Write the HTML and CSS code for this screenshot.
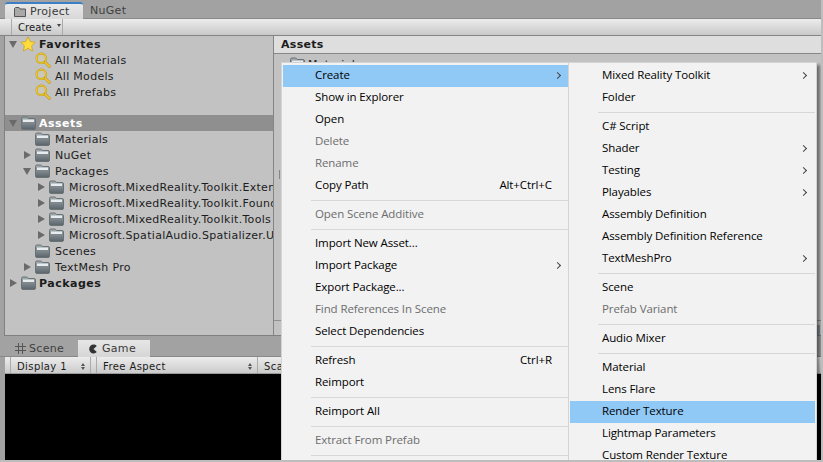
FILE: index.html
```html
<!DOCTYPE html>
<html lang="en">
<head>
  <meta charset="UTF-8">
  <meta name="viewport" content="width=device-width, initial-scale=1.0">
  <title>Project</title>
  <link rel="stylesheet" href="styles.css">
</head>
<body>

  <svg class="defs" width="0" height="0">
    <linearGradient id="folder-body" x1="0" y1="0" x2="0" y2="1">
      <stop offset="0" stop-color="#a3adb1"/>
      <stop offset="1" stop-color="#59636a"/>
    </linearGradient>
    <symbol id="folder" viewBox="0 0 15 14">
      <path d="M.5 12 V2.500 Q.5 1 2 1 H5.500 Q6.500 1 7 2 L7.500 2.500 H13 Q14.500 2.500 14.500 4 V12 Q14.500 13.500 13 13.500 H2 Q.5 13.500 .5 12 Z" fill="url(#folder-body)" stroke="#6a7275"/>
      <path d="M2 3.500 H13 V6 H2 Z" fill="#e8ecee"/>
      <path d="M1 6 H14 V7 H1 Z" fill="#7f8a8e"/>
    </symbol>
    <symbol id="search" viewBox="0 0 16 16">
      <circle cx="6.300" cy="6.300" r="4.800" fill="#cbc8b6" stroke="#b8941a" stroke-width="2"/>
      <circle cx="6.300" cy="6.300" r="4.800" fill="none" stroke="#f4cc2c" stroke-width="1.200"/>
      <path d="M10 10 L14.500 14.500" stroke="#b8941a" stroke-width="2.600" stroke-linecap="round"/>
      <path d="M10 10 L14.500 14.500" stroke="#f4cc2c" stroke-width="1.500" stroke-linecap="round"/>
    </symbol>
  </svg>

  <div class="window">

    <!-- project window -->
    <div class="tabbar">
      <div class="tab tab-project">
        <svg class="tab-icon" width="12" height="10" viewBox="0 0 12 10"><path d="M.5 9.500 V1.500 L1.500 .5 H5 L6 2 H11.500 V9.500 Z" fill="#a8a8a8" stroke="#555"/></svg>
        Project
      </div>
      <div class="tab tab-off">NuGet</div>
    </div>
    <div class="toolbar">
      <div class="create-btn">Create <span class="caret"></span></div>
    </div>

    <div class="panes">
      <div class="tree">
        <div class="row depth-0"><span class="arrow down"></span>
          <svg class="star" width="16" height="16" viewBox="0 0 16 16"><path d="M8 .8 L10.200 5.600 L15.300 6.200 L11.600 9.800 L12.600 15 L8 12.400 L3.400 15 L4.400 9.800 L.7 6.200 L5.800 5.600 Z" fill="#ffdc3c" stroke="#c9a227" stroke-width=".8"/></svg>
          <b>Favorites</b></div>
        <div class="row depth-1"><span class="arrow none"></span><svg class="lens"><use href="#search"/></svg>All Materials</div>
        <div class="row depth-1"><span class="arrow none"></span><svg class="lens"><use href="#search"/></svg>All Models</div>
        <div class="row depth-1 last-fav"><span class="arrow none"></span><svg class="lens"><use href="#search"/></svg>All Prefabs</div>

        <div class="row depth-0 selected"><span class="arrow down"></span><svg class="ico"><use href="#folder"/></svg><b>Assets</b></div>
        <div class="row depth-1"><span class="arrow none"></span><svg class="ico"><use href="#folder"/></svg>Materials</div>
        <div class="row depth-1"><span class="arrow right"></span><svg class="ico"><use href="#folder"/></svg>NuGet</div>
        <div class="row depth-1"><span class="arrow down"></span><svg class="ico"><use href="#folder"/></svg>Packages</div>
        <div class="row depth-2"><span class="arrow right"></span><svg class="ico"><use href="#folder"/></svg>Microsoft.MixedReality.Toolkit.Extensions</div>
        <div class="row depth-2"><span class="arrow right"></span><svg class="ico"><use href="#folder"/></svg>Microsoft.MixedReality.Toolkit.Foundation</div>
        <div class="row depth-2"><span class="arrow right"></span><svg class="ico"><use href="#folder"/></svg>Microsoft.MixedReality.Toolkit.Tools</div>
        <div class="row depth-2"><span class="arrow right"></span><svg class="ico"><use href="#folder"/></svg>Microsoft.SpatialAudio.Spatializer.Unity</div>
        <div class="row depth-1"><span class="arrow none"></span><svg class="ico"><use href="#folder"/></svg>Scenes</div>
        <div class="row depth-1"><span class="arrow right"></span><svg class="ico"><use href="#folder"/></svg>TextMesh Pro</div>
        <div class="row depth-0"><span class="arrow right"></span><svg class="ico"><use href="#folder"/></svg><b>Packages</b></div>
      </div>
      <div class="browser">
        <div class="browser-head"><b>Assets</b></div>
        <div class="browser-body">
          <div class="row browser-row"><svg class="ico"><use href="#folder"/></svg>Materials</div>
          <span class="stub"></span>
        </div>
        <div class="browser-status"><span class="slider"></span></div>
      </div>
    </div>

    <!-- game window -->
    <div class="tabbar tabbar-low">
      <div class="tab tab-off tab-scene">
        <svg class="tab-icon" width="11" height="11" viewBox="0 0 11 11"><path d="M3.500 0 V11 M7.500 0 V11 M0 3.500 H11 M0 7.500 H11" stroke="#555" fill="none"/></svg>
        Scene
      </div>
      <div class="tab tab-game">
        <svg class="tab-icon" width="10" height="10" viewBox="0 0 10 10"><path d="M8.800 2 A4.400 4.400 0 1 0 8.800 8 L5.500 5 Z" fill="#333"/></svg>
        Game
      </div>
    </div>
    <div class="game-bar">
      <div class="drop drop-display">Display 1 <span class="updown"></span></div>
      <div class="drop drop-aspect">Free Aspect <span class="updown"></span></div>
      <div class="drop">Scale</div>
    </div>
    <div class="game-view"></div>

    <!-- context menu -->
    <div class="menu menu-main">
      <div class="item hot has-sub">Create</div>
      <div class="item">Show in Explorer</div>
      <div class="item">Open</div>
      <div class="item off">Delete</div>
      <div class="item off">Rename</div>
      <div class="item">Copy Path<span class="keys">Alt+Ctrl+C</span></div>
      <div class="sep"></div>
      <div class="item off">Open Scene Additive</div>
      <div class="sep"></div>
      <div class="item">Import New Asset...</div>
      <div class="item has-sub">Import Package</div>
      <div class="item">Export Package...</div>
      <div class="item off">Find References In Scene</div>
      <div class="item">Select Dependencies</div>
      <div class="sep"></div>
      <div class="item">Refresh<span class="keys">Ctrl+R</span></div>
      <div class="item">Reimport</div>
      <div class="sep"></div>
      <div class="item">Reimport All</div>
      <div class="sep"></div>
      <div class="item off">Extract From Prefab</div>
      <div class="sep"></div>
    </div>

    <div class="menu menu-sub">
      <div class="item has-sub">Mixed Reality Toolkit</div>
      <div class="item">Folder</div>
      <div class="sep"></div>
      <div class="item">C# Script</div>
      <div class="item has-sub">Shader</div>
      <div class="item has-sub">Testing</div>
      <div class="item has-sub">Playables</div>
      <div class="item">Assembly Definition</div>
      <div class="item">Assembly Definition Reference</div>
      <div class="item has-sub">TextMeshPro</div>
      <div class="sep"></div>
      <div class="item">Scene</div>
      <div class="item off">Prefab Variant</div>
      <div class="sep"></div>
      <div class="item">Audio Mixer</div>
      <div class="sep"></div>
      <div class="item">Material</div>
      <div class="item">Lens Flare</div>
      <div class="item hot">Render Texture</div>
      <div class="item">Lightmap Parameters</div>
      <div class="item">Custom Render Texture</div>
    </div>

  </div>

</body>
</html>
```

FILE: styles.css
```css
html, body {
  height: 100%;
  margin: 0;
  overflow: hidden;
}
body {
  background-color: #bdbdbd;
  font-family: "DejaVu Sans", sans-serif;
  font-size: 11px;
  letter-spacing: .3px;
  color: #1c1c1c;
}
.defs {
  position: absolute;
}
.window {
  position: relative;
  display: flex;
  flex-direction: column;
  width: 821px;
  height: 460px;
  overflow: hidden;
  background-color: #a2a2a2;
}

/* tabs */
.tabbar {
  display: flex;
  flex: none;
  height: 19px;
  box-sizing: border-box;
  padding: 2px 0 0 5px;
  border-bottom: 1px solid #888;
  background-color: #a2a2a2;
}
.tab {
  display: flex;
  align-items: center;
  gap: 4px;
  color: #3a3a3a;
  box-sizing: border-box;
}
.tab-project {
  width: 78px;
  padding-left: 9px;
  margin-bottom: -1px;
  border-top: 2px solid #3c7fc4;
  border-radius: 3px 3px 0 0;
  background: linear-gradient(#e8e8e8, #d8d8d8);
}
.tab-off {
  padding-left: 7px;
  color: #3f3f3f;
}
.tabbar-low {
  height: 21px;
  padding-top: 4px;
}
.tab-scene {
  width: 73px;
  padding-left: 10px;
  gap: 3px;
}
.tab-game {
  width: 72px;
  padding-left: 10px;
  gap: 4px;
  margin-bottom: -1px;
  background: linear-gradient(#e6e6e6, #d6d6d6);
}

.toolbar {
  display: flex;
  flex: none;
  height: 17px;
  box-sizing: border-box;
  padding-left: 11px;
  border-bottom: 1px solid #848484;
  background: linear-gradient(#ececec, #c9c9c9);
}
.create-btn {
  display: flex;
  align-items: center;
  width: 52px;
  box-sizing: border-box;
  padding-left: 6px;
  gap: 5px;
  border-left: 1px solid #aaa;
  border-right: 1px solid #aaa;
  font-size: 10px;
  letter-spacing: .1px;
}
.caret {
  border-left: 2.500px solid transparent;
  border-right: 2.500px solid transparent;
  border-top: 3px solid #444;
  margin-top: -3px;
}

/* panes */
.panes {
  display: flex;
  flex: none;
  height: 299px;
  margin-left: 4px;
  border-left: 1px solid #808080;
  border-bottom: 1px solid #808080;
  background-color: #c2c2c2;
}
.tree {
  width: 268px;
  flex: none;
  overflow: hidden;
  border-right: 1px solid #858585;
}
.row {
  display: flex;
  align-items: center;
  height: 16px;
  white-space: nowrap;
}
.row b {
  letter-spacing: .5px;
}
.depth-0 { padding-left: 3px; }
.depth-1 { padding-left: 17px; }
.depth-2 { padding-left: 31px; }
.depth-1 .ico, .depth-2 .ico { margin-right: 5px; }
.last-fav { margin-bottom: 15px; }
.selected {
  background-color: #8f8f8f;
  color: #fff;
}
.arrow {
  flex: none;
  width: 0;
  height: 0;
  margin-right: 4px;
}
.arrow.down {
  border-left: 4px solid transparent;
  border-right: 4px solid transparent;
  border-top: 7px solid #6a6a6a;
  margin-left: 1px;
}
.arrow.right {
  border-top: 4px solid transparent;
  border-bottom: 4px solid transparent;
  border-left: 7px solid #6a6a6a;
  margin-left: 2px;
}
.arrow.none {
  width: 13px;
  margin-right: 0;
}
.ico {
  flex: none;
  width: 15px;
  height: 14px;
  margin-right: 3px;
}
.lens {
  flex: none;
  width: 16px;
  height: 16px;
  margin-right: 4px;
}
.star {
  flex: none;
  margin: 0 3px 0 -1px;
}

.browser {
  display: flex;
  flex-direction: column;
  flex: 1;
  overflow: hidden;
}
.browser-head {
  flex: none;
  height: 18px;
  box-sizing: border-box;
  padding: 2px 0 0 7px;
  border-bottom: 1px solid #888;
  background-color: #dedede;
}
.browser-body {
  position: relative;
  flex: 1;
  padding-top: 2px;
}
.browser-row {
  padding-left: 16px;
}
.stub {
  position: absolute;
  top: 116px;
  left: 5px;
  width: 1px;
  height: 9px;
  background-color: #858585;
}
.browser-status {
  display: flex;
  justify-content: flex-end;
  flex: none;
  height: 14px;
  padding-right: 1px;
  border-top: 1px solid #909090;
}
.slider {
  width: 3px;
  height: 10px;
  margin: 4px 0 0 4px;
  background-color: #8b9296;
  align-self: flex-start;
}

/* game view */
.game-bar {
  display: flex;
  flex: none;
  height: 17px;
  box-sizing: border-box;
  padding-left: 5px;
  margin-left: 5px;
  border-bottom: 1px solid #9a9a9a;
  background: linear-gradient(#ececec, #cbcbcb);
  font-size: 10px;
  letter-spacing: .4px;
}
.drop {
  display: flex;
  align-items: center;
  box-sizing: border-box;
  padding: 2px 4px 0 6px;
  border-left: 1px solid #aaa;
}
.drop-display {
  width: 81px;
  justify-content: space-between;
  border-right: 1px solid #aaa;
  margin-right: 5px;
}
.drop-aspect {
  width: 161px;
  justify-content: space-between;
}
.updown {
  position: relative;
  width: 5px;
  height: 7px;
}
.updown::before {
  content: "";
  position: absolute;
  top: 0;
  left: 0;
  border-left: 2.500px solid transparent;
  border-right: 2.500px solid transparent;
  border-bottom: 3px solid #555;
}
.updown::after {
  content: "";
  position: absolute;
  bottom: 0;
  left: 0;
  border-left: 2.500px solid transparent;
  border-right: 2.500px solid transparent;
  border-top: 3px solid #555;
}
.game-view {
  flex: 1;
  margin-left: 5px;
  background-color: #000;
}

/* context menus */
.menu {
  position: absolute;
  top: 62px;
  box-sizing: border-box;
  height: 420px;
  padding: 2px 1px;
  background-color: #f2f2f2;
  border: 1px solid #d4d4d4;
  font-family: "Open Sans", "Noto Sans", sans-serif;
  font-size: 11.500px;
  letter-spacing: -.1px;
  color: #000;
}
.menu-main {
  left: 281px;
  width: 290px;
}
.menu-sub {
  left: 568px;
  width: 249px;
  box-shadow: 3px 3px 3px rgba(0, 0, 0, .45);
}
.item {
  position: relative;
  height: 22px;
  line-height: 20px;
  padding-left: 32px;
  white-space: nowrap;
}
.off {
  color: #6d6d6d;
}
.hot {
  background-color: #90c8f6;
}
.keys {
  position: absolute;
  right: 17px;
}
.has-sub::after {
  content: "";
  position: absolute;
  right: 9px;
  top: 8px;
  width: 4px;
  height: 4px;
  border-top: 1px solid #444;
  border-right: 1px solid #444;
  transform: rotate(45deg);
}
.sep {
  height: 1px;
  margin: 3px 0 3px 28px;
  background-color: #d7d7d7;
}
```
